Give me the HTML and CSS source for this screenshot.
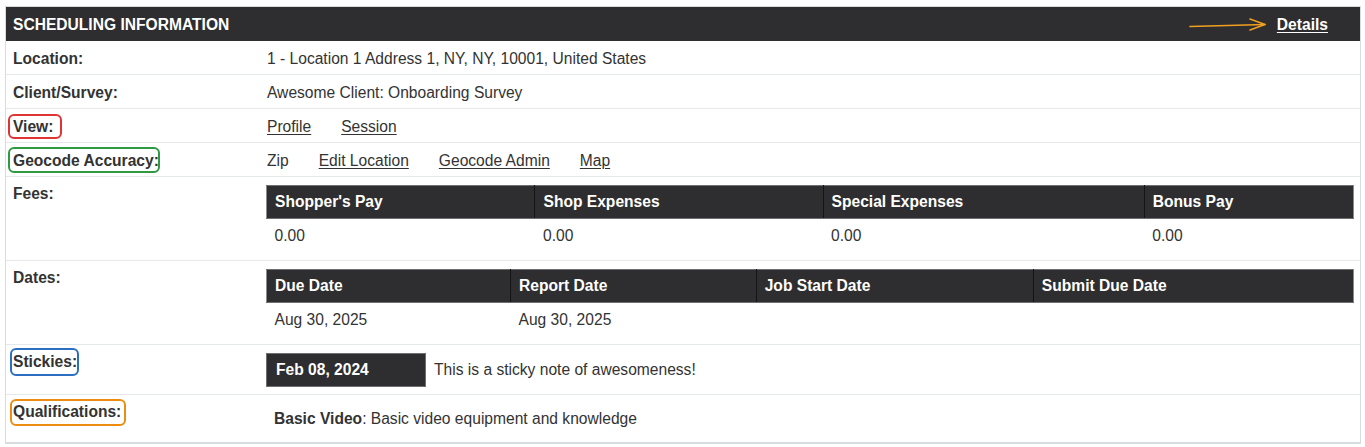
FILE: index.html
```html
<!DOCTYPE html>
<html lang="en">
<head>
<meta charset="utf-8">
<title>Scheduling Information</title>
<link rel="stylesheet" href="styles.css">
</head>
<body>
<section class="panel">
  <header class="panel-head">
    <h2 class="panel-title">SCHEDULING INFORMATION</h2>
    <svg class="arrow" width="90" height="20" viewBox="0 0 90 20" aria-hidden="true">
      <path d="M2 11.5 L77 9.5" fill="none" stroke="#f0a01e" stroke-width="1.6" stroke-linecap="round"/>
      <path d="M62 4 L77 9.5 L62 15" fill="none" stroke="#f0a01e" stroke-width="1.6" stroke-linecap="round" stroke-linejoin="round"/>
    </svg>
    <a class="details" href="#">Details</a>
  </header>

  <div class="row simple">
    <div class="label">Location:</div>
    <div class="value">1 - Location 1 Address 1, NY, NY, 10001, United States</div>
  </div>
  <div class="row simple">
    <div class="label">Client/Survey:</div>
    <div class="value">Awesome Client: Onboarding Survey</div>
  </div>
  <div class="row simple">
    <div class="label"><span class="mark mark-red">View:</span></div>
    <div class="value links"><a href="#">Profile</a><a href="#">Session</a></div>
  </div>
  <div class="row simple">
    <div class="label"><span class="mark mark-green">Geocode Accuracy:</span></div>
    <div class="value links"><span>Zip</span><a href="#">Edit Location</a><a href="#">Geocode Admin</a><a href="#">Map</a></div>
  </div>
  <div class="row">
    <div class="label">Fees:</div>
    <div class="value tight">
      <table class="grid fees">
        <thead><tr><th>Shopper's Pay</th><th>Shop Expenses</th><th>Special Expenses</th><th>Bonus Pay</th></tr></thead>
        <tbody><tr><td>0.00</td><td>0.00</td><td>0.00</td><td>0.00</td></tr></tbody>
      </table>
    </div>
  </div>
  <div class="row">
    <div class="label">Dates:</div>
    <div class="value tight">
      <table class="grid dates">
        <thead><tr><th>Due Date</th><th>Report Date</th><th>Job Start Date</th><th>Submit Due Date</th></tr></thead>
        <tbody><tr><td>Aug 30, 2025</td><td>Aug 30, 2025</td><td></td><td></td></tr></tbody>
      </table>
    </div>
  </div>
  <div class="row">
    <div class="label"><span class="mark mark-blue">Stickies:</span></div>
    <div class="value tight sticky">
      <span class="sticky-date">Feb 08, 2024</span>
      <span class="sticky-text">This is a sticky note of awesomeness!</span>
    </div>
  </div>
  <div class="row last">
    <div class="label"><span class="mark mark-orange">Qualifications:</span></div>
    <div class="value qual"><b>Basic Video</b>: Basic video equipment and knowledge</div>
  </div>
</section>
</body>
</html>
```
FILE: styles.css
```css
html, body {
  margin: 0;
  padding: 0;
  background: #ffffff;
}
body {
  font-family: "Liberation Sans", Arial, sans-serif;
  font-size: 15.6px;
  line-height: 18px;
  color: #333333;
}
.panel {
  margin: 6px 4px 0 5px;
  border: 1px solid #d9dcdf;
  border-bottom-width: 2px;
}
.panel-head {
  position: relative;
  display: flex;
  align-items: center;
  justify-content: space-between;
  height: 34px;
  padding: 1px 32px 0 7px;
  box-sizing: border-box;
  background: #2e2e30;
  color: #ffffff;
}
.panel-title {
  margin: 0;
  font-size: 15.6px;
  font-weight: bold;
  line-height: 18px;
  letter-spacing: 0;
}
.arrow {
  position: absolute;
  left: 1182px;
  top: 8px;
}
.details {
  color: #ffffff;
  font-weight: bold;
  text-decoration: underline;
  text-underline-offset: 2px;
}
.row {
  display: grid;
  grid-template-columns: 253px 1fr;
  border-top: 1px solid #e5e9ec;
  padding: 8px 6px 7px 7px;
}
.row.simple {
  padding-top: 9px;
  padding-bottom: 6px;
}
.panel-head + .row {
  border-top: none;
}
.label {
  font-weight: bold;
  line-height: 18px;
}
.value {
  padding-left: 1px;
  line-height: 18px;
}
.value.tight {
  padding-left: 0;
}
.links {
  display: flex;
  gap: 30px;
}
.links a {
  color: #333333;
  text-decoration: underline;
  text-underline-offset: 2px;
}
.mark {
  position: relative;
  display: inline-block;
}
.mark::after {
  content: "";
  position: absolute;
  border: 2px solid;
  border-radius: 6px;
}
.mark-red::after {
  border-color: #e03434;
  top: -4px; bottom: -3px; left: -5px; right: -9px;
}
.mark-green::after {
  border-color: #2f9a42;
  top: -5px; bottom: -3px; left: -5px; right: -1px;
}
.mark-blue::after {
  border-color: #2b6fc2;
  top: -5px; bottom: -5px; left: -3px; right: -2px;
}
.mark-orange::after {
  border-color: #ec8d12;
  top: -4px; bottom: -5px; left: -3px; right: -5px;
}
.grid {
  width: 100%;
  border-collapse: collapse;
  table-layout: fixed;
}
.grid th {
  box-sizing: border-box;
  background: #2e2e30;
  color: #ffffff;
  font-weight: bold;
  text-align: left;
  padding: 7px 8px;
  border: 1px solid #6f6f72;
  border-left-color: #141415;
  border-right-color: #141415;
  line-height: 18px;
}
.grid th:first-child {
  border-left-color: #8a8a8c;
}
.grid th:last-child {
  border-right-color: #8a8a8c;
}
.grid td {
  padding: 8px 8px;
  line-height: 18px;
  height: 18px;
}
.fees th:nth-child(1) { width: 24.7%; }
.fees th:nth-child(2) { width: 26.5%; }
.fees th:nth-child(3) { width: 29.55%; }
.fees th:nth-child(4) { width: 19.25%; }
.dates th:nth-child(1) { width: 22.45%; }
.dates th:nth-child(2) { width: 22.6%; }
.dates th:nth-child(3) { width: 25.5%; }
.dates th:nth-child(4) { width: 29.45%; }
.sticky {
  display: flex;
  align-items: center;
  gap: 8px;
}
.sticky-date {
  display: inline-block;
  width: 160px;
  box-sizing: border-box;
  padding: 7px 9px 7px;
  background: #2e2e30;
  color: #ffffff;
  font-weight: bold;
  border: 1px solid #6f6f72;
}
.qual {
  padding: 7px 8px;
}
.qual b {
  font-weight: bold;
}
```
